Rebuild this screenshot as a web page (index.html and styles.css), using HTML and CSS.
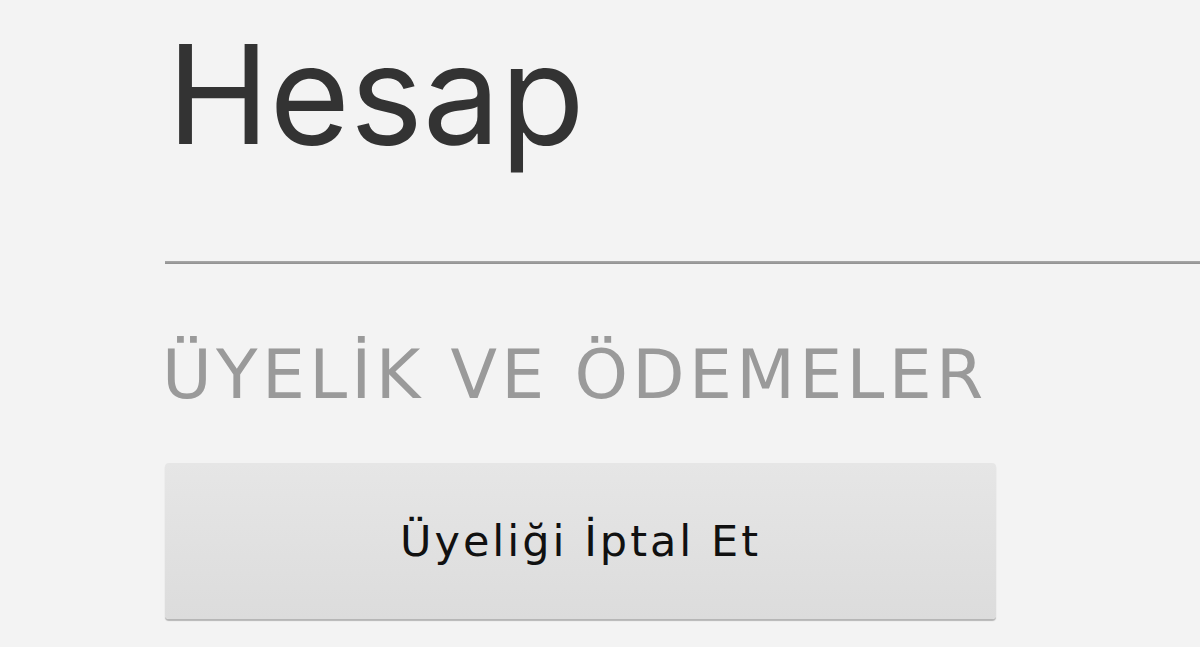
FILE: index.html
```html
<!DOCTYPE html>
<html lang="tr">
<head>
<meta charset="utf-8">
<link rel="stylesheet" href="styles.css">
</head>
<body>
<main class="page">
  <h1 class="title">Hesap</h1>
  <hr class="divider">
  <section class="section">
    <h2 class="section-title">ÜYELİK VE ÖDEMELER</h2>
    <button class="btn">Üyeliği İptal Et</button>
  </section>
</main>
</body>
</html>
```
FILE: styles.css
```css
html, body {
  margin: 0;
  padding: 0;
  background: #f3f3f3;
  width: 1200px;
  height: 647px;
  overflow: hidden;
}
.page {
  padding-left: 165px;
  font-family: Inter, "Liberation Sans", sans-serif;
}
.title {
  margin: 0;
  padding-top: 14px;
  padding-left: 2px;
  font-family: Inter, "Liberation Sans", sans-serif;
  font-weight: 400;
  font-size: 138px;
  line-height: 160px;
  color: #333;
  letter-spacing: 0;
  height: 247px;
}
.divider {
  margin: 0;
  border: 0;
  height: 3px;
  background: linear-gradient(#a8a8a8, #8f8f8f);
}
.section-title {
  margin: 0;
  padding-top: 75px;
  font-family: "DejaVu Sans", "Liberation Sans", sans-serif;
  font-weight: 400;
  font-size: 68px;
  line-height: 72px;
  color: #9a9a9a;
  letter-spacing: 4.3px;
  margin-left: -3px;
}
.btn {
  display: block;
  margin-top: 52px;
  width: 831px;
  height: 156px;
  border: 0;
  border-radius: 4px;
  background: linear-gradient(#e6e6e6, #dcdcdc);
  box-shadow: 0 2px 1px rgba(0,0,0,0.25);
  font-family: "DejaVu Sans", "Liberation Sans", sans-serif;
  font-size: 43px;
  color: #111;
  letter-spacing: 3px;
  padding: 0;
}
```
